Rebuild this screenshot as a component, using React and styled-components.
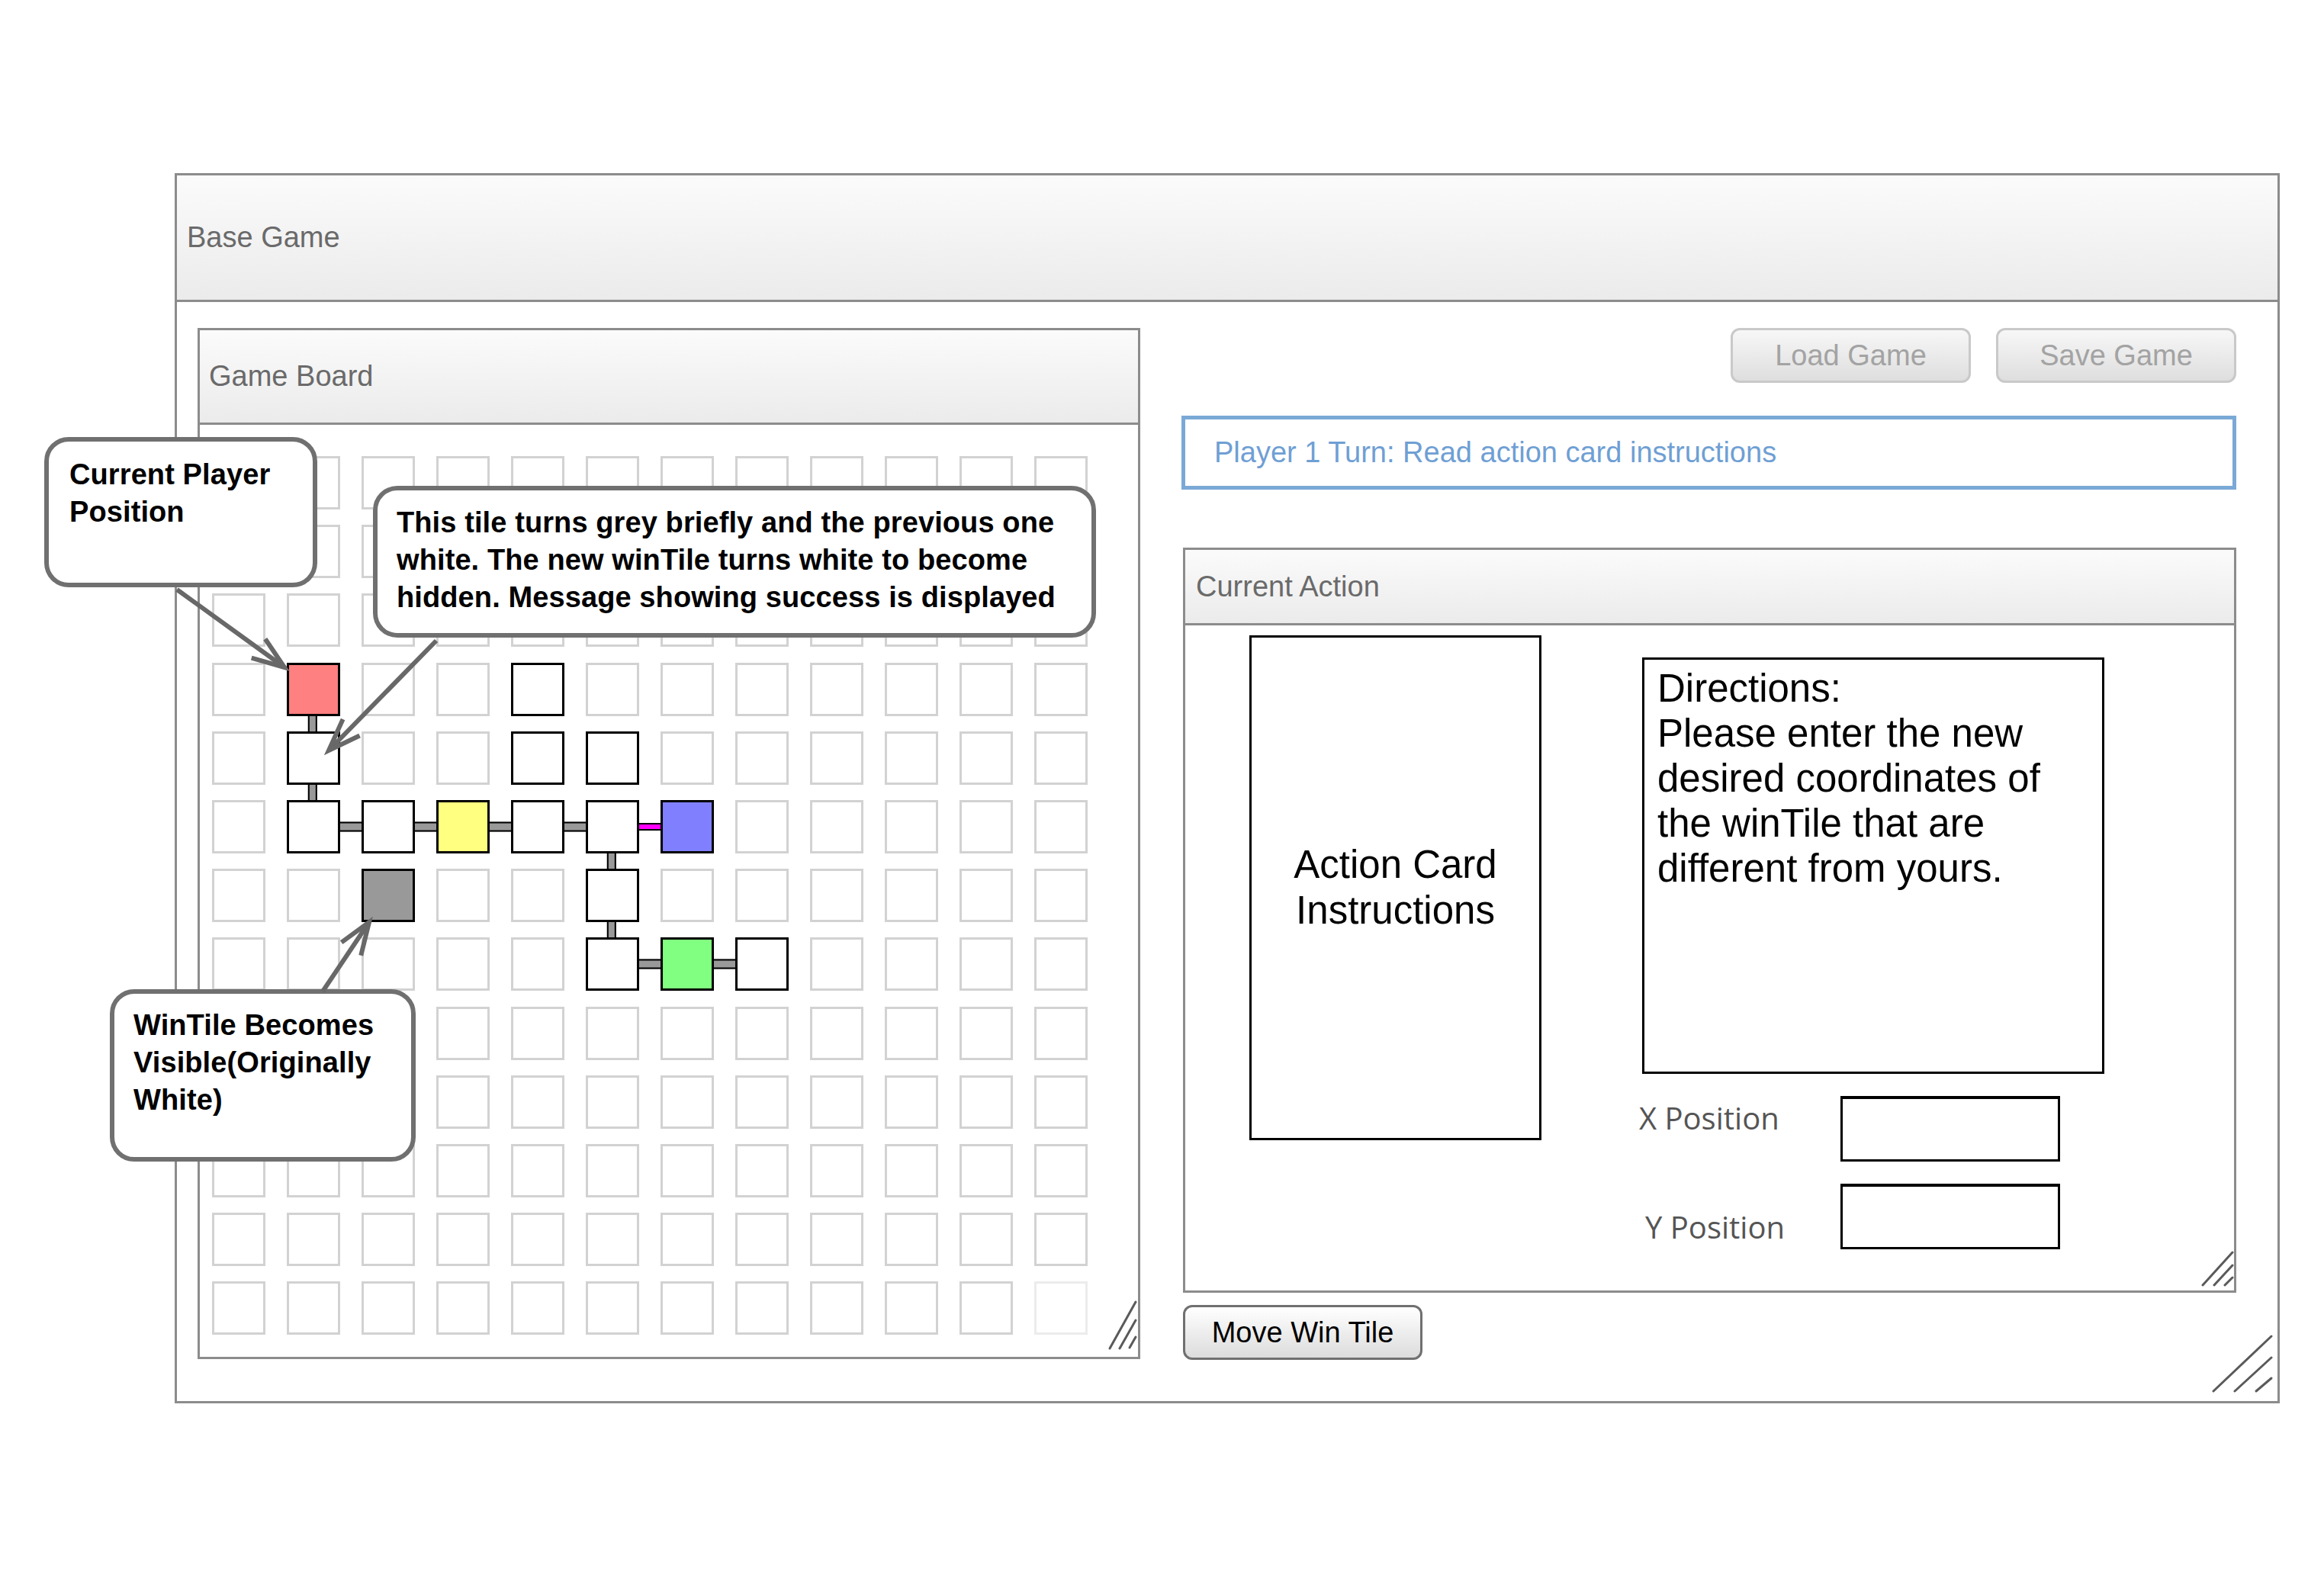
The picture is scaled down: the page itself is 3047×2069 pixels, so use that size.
import React from 'react';
import styled, { createGlobalStyle } from 'styled-components';

const GlobalStyle = createGlobalStyle`
  html, body {
    margin: 0;
    padding: 0;
    background: #fff;
  }
  body {
    font-family: "Liberation Sans", Arial, sans-serif;
  }
`;

const Page = styled.div`
  position: relative;
  width: 3047px;
  height: 2069px;
  padding: 227px 0 0 229px;
  box-sizing: border-box;
  overflow: hidden;
`;

const Window = styled.div`
  position: relative;
  width: 2760px;
  height: 1613px;
  box-sizing: border-box;
  border: 3px solid #8c8c8c;
  display: flex;
  flex-direction: column;
`;

const TitleBar = styled.div`
  flex: none;
  height: ${({ h }) => h}px;
  box-sizing: border-box;
  border-bottom: 3px solid #8c8c8c;
  background: linear-gradient(#fbfbfb, #ebebeb);
  display: flex;
  align-items: center;
  padding-left: ${({ pad }) => pad}px;
  font-size: 38px;
  color: #6a6a6a;
`;

const WindowBody = styled.div`
  flex: 1;
  display: flex;
  padding: 34px 0 0 27px;
  gap: 54px;
`;

const Panel = styled.div`
  position: relative;
  flex: none;
  width: ${({ w }) => w}px;
  height: ${({ h }) => h}px;
  box-sizing: border-box;
  border: 3px solid #8c8c8c;
  display: flex;
  flex-direction: column;
  background: #fff;
`;

const BoardBody = styled.div`
  padding: 41px 0 0 16px;
`;

const TileGrid = styled.div`
  display: grid;
  grid-template-columns: repeat(12, 70px);
  grid-auto-rows: 70px;
  column-gap: 28px;
  row-gap: 20.2px;
`;

const Tile = styled.div`
  position: relative;
  box-sizing: border-box;
  border: 3px solid ${({ active, faded }) => (active ? '#000' : faded ? '#ececec' : '#d2d2d2')};
  background: ${({ fill }) => fill || '#fff'};
  z-index: ${({ active }) => (active ? 2 : 1)};
`;

const LinkRight = styled.span`
  position: absolute;
  left: 67px;
  top: 50%;
  width: 28px;
  height: ${({ magenta }) => (magenta ? 10 : 13)}px;
  transform: translateY(-50%);
  box-sizing: border-box;
  border-top: 2px solid #000;
  border-bottom: 2px solid #000;
  background: ${({ magenta }) => (magenta ? '#ff00ff' : '#999')};
`;

const LinkDown = styled.span`
  position: absolute;
  top: 67px;
  left: 50%;
  width: 12px;
  height: 21px;
  transform: translateX(-60%);
  box-sizing: border-box;
  border-left: 2px solid #000;
  border-right: 2px solid #000;
  background: #999;
`;

const SideColumn = styled.div`
  width: 1383px;
  display: flex;
  flex-direction: column;
`;

const ButtonRow = styled.div`
  display: flex;
  justify-content: flex-end;
  gap: 33px;
`;

const GreyButton = styled.div`
  width: 315px;
  height: 72px;
  box-sizing: border-box;
  border: 3px solid #c9c9c9;
  border-radius: 12px;
  background: linear-gradient(#f7f7f7, #dedede);
  display: flex;
  align-items: center;
  justify-content: center;
  font-size: 38px;
  color: #a3a3a3;
`;

const StatusBox = styled.div`
  margin-top: 43px;
  height: 97px;
  box-sizing: border-box;
  border: 5px solid #7aa9d6;
  display: flex;
  align-items: center;
  padding-left: 38px;
  font-size: 38px;
  color: #6f9fd4;
`;

const ActionBody = styled.div`
  display: flex;
  padding: 13px 0 0 84px;
`;

const CardBox = styled.div`
  width: 383px;
  height: 662px;
  box-sizing: border-box;
  border: 3px solid #000;
  display: flex;
  align-items: center;
  justify-content: center;
  text-align: center;
  font-size: 51px;
  line-height: 60px;
  color: #000;
`;

const DirectionsColumn = styled.div`
  margin-left: 132px;
  padding-top: 29px;
  display: flex;
  flex-direction: column;
`;

const DirectionsBox = styled.div`
  width: 606px;
  height: 546px;
  box-sizing: border-box;
  border: 3px solid #000;
  padding: 8px 0 0 17px;
  font-size: 51px;
  line-height: 59px;
  color: #000;
`;

const PositionGrid = styled.div`
  margin: 29px 0 0 -4px;
  display: grid;
  grid-template-columns: 264px 288px;
  grid-auto-rows: 86px;
  row-gap: 29px;
`;

const PositionLabel = styled.div`
  align-self: center;
  padding-left: ${({ indent }) => indent}px;
  margin-top: ${({ shift }) => (shift > 0 ? shift * 2 : 0)}px;
  margin-bottom: ${({ shift }) => (shift < 0 ? -shift * 2 : 0)}px;
  font-family: "Open Sans", "Liberation Sans", sans-serif;
  font-size: 40px;
  color: #555;
`;

const InputBox = styled.div`
  box-sizing: border-box;
  border: 3px solid #000;
  border-top-width: 4px;
  background: #fff;
`;

const MoveButton = styled.div`
  margin: 16px 0 0 2px;
  width: 314px;
  height: 72px;
  box-sizing: border-box;
  border: 3px solid #707070;
  border-radius: 12px;
  background: linear-gradient(#ffffff, #dcdcdc);
  display: flex;
  align-items: center;
  justify-content: center;
  font-size: 38px;
  color: #000;
`;

const GripSvg = styled.svg`
  position: absolute;
  right: 0;
  bottom: 0;
`;

const Callout = styled.div`
  position: absolute;
  left: ${({ x }) => x}px;
  top: ${({ y }) => y}px;
  width: ${({ w }) => w}px;
  height: ${({ h }) => h}px;
  box-sizing: border-box;
  border: 6px solid #707070;
  border-radius: 32px;
  background: #fff;
  padding: ${({ pt }) => pt}px 0 0 ${({ pl }) => pl}px;
  font-weight: bold;
  font-size: 38px;
  line-height: 49px;
  letter-spacing: 0.1px;
  color: #000;
  white-space: nowrap;
  z-index: 5;
`;

const ArrowLayer = styled.svg`
  position: absolute;
  left: 0;
  top: 0;
  pointer-events: none;
  z-index: 6;
`;

const cells = {
  '3-1': { fill: '#ff8080', down: true },
  '3-4': {},
  '4-1': { down: true },
  '4-4': {},
  '4-5': {},
  '5-1': { right: 'grey' },
  '5-2': { right: 'grey' },
  '5-3': { fill: '#ffff80', right: 'grey' },
  '5-4': { right: 'grey' },
  '5-5': { right: 'magenta', down: true },
  '5-6': { fill: '#8080ff' },
  '6-2': { fill: '#999999' },
  '6-5': { down: true },
  '7-5': { right: 'grey' },
  '7-6': { fill: '#80ff80', right: 'grey' },
  '7-7': {},
};

const Grip = ({ w, h, lines }) => (
  <GripSvg width={w} height={h} viewBox={`0 0 ${w} ${h}`}>
    {lines.map((l, i) => (
      <line key={i} x1={l[0]} y1={l[1]} x2={l[2]} y2={l[3]} stroke="#5a5a5a" strokeWidth="3" strokeLinecap="round" />
    ))}
  </GripSvg>
);

const Arrow = ({ from, to }) => {
  const dx = from[0] - to[0];
  const dy = from[1] - to[1];
  const len = Math.hypot(dx, dy);
  const ux = dx / len;
  const uy = dy / len;
  const wing = (deg) => {
    const a = (deg * Math.PI) / 180;
    const c = Math.cos(a);
    const s = Math.sin(a);
    return [to[0] + 45 * (ux * c - uy * s), to[1] + 45 * (ux * s + uy * c)];
  };
  const w1 = wing(20);
  const w2 = wing(-20);
  return (
    <g stroke="#686868" strokeWidth="6" fill="none">
      <line x1={from[0]} y1={from[1]} x2={to[0]} y2={to[1]} />
      <polyline points={`${w1[0]},${w1[1]} ${to[0]},${to[1]} ${w2[0]},${w2[1]}`} />
    </g>
  );
};

const Board = () => {
  const tiles = [];
  for (let r = 0; r < 13; r++) {
    for (let c = 0; c < 12; c++) {
      const cell = cells[`${r}-${c}`];
      tiles.push(
        <Tile key={`${r}-${c}`} active={!!cell} fill={cell && cell.fill} faded={r === 12 && c === 11}>
          {cell && cell.right && <LinkRight magenta={cell.right === 'magenta'} />}
          {cell && cell.down && <LinkDown />}
        </Tile>
      );
    }
  }
  return <TileGrid>{tiles}</TileGrid>;
};

export default function App() {
  return (
    <Page>
      <GlobalStyle />
      <Window>
        <TitleBar h={166} pad={13}>Base Game</TitleBar>
        <WindowBody>
          <Panel w={1236} h={1352}>
            <TitleBar h={124} pad={12}>Game Board</TitleBar>
            <BoardBody>
              <Board />
            </BoardBody>
            <Grip w={40} h={75} lines={[[3, 64, 37, 3], [16, 64, 37, 27], [29, 63, 37, 49]]} />
          </Panel>
          <SideColumn>
            <ButtonRow>
              <GreyButton>Load Game</GreyButton>
              <GreyButton>Save Game</GreyButton>
            </ButtonRow>
            <StatusBox>Player 1 Turn: Read action card instructions</StatusBox>
            <Panel w={1381} h={977} style={{ marginTop: 76, marginLeft: 2 }}>
              <TitleBar h={99} pad={14}>Current Action</TitleBar>
              <ActionBody>
                <CardBox>
                  Action Card
                  <br />
                  Instructions
                </CardBox>
                <DirectionsColumn>
                  <DirectionsBox>
                    Directions:
                    <br />
                    Please enter the new
                    <br />
                    desired coordinates of
                    <br />
                    the winTile that are
                    <br />
                    different from yours.
                  </DirectionsBox>
                  <PositionGrid>
                    <PositionLabel indent={0} shift={-15}>X Position</PositionLabel>
                    <InputBox />
                    <PositionLabel indent={8} shift={13}>Y Position</PositionLabel>
                    <InputBox />
                  </PositionGrid>
                </DirectionsColumn>
              </ActionBody>
              <Grip w={50} h={60} lines={[[9, 53, 48, 10], [24, 53, 48, 27], [38, 53, 48, 43]]} />
            </Panel>
            <MoveButton>Move Win Tile</MoveButton>
          </SideColumn>
        </WindowBody>
        <Grip w={90} h={90} lines={[[6, 77, 82, 5], [34, 77, 82, 33], [62, 77, 82, 60]]} />
      </Window>

      <Callout x={58} y={573} w={358} h={197} pt={19} pl={27}>
        Current Player
        <br />
        Position
      </Callout>
      <Callout x={489} y={637} w={948} h={199} pt={18} pl={25}>
        This tile turns grey briefly and the previous one
        <br />
        white. The new winTile turns white to become
        <br />
        hidden. Message showing success is displayed
      </Callout>
      <Callout x={144} y={1297} w={401} h={226} pt={17} pl={25}>
        WinTile Becomes
        <br />
        Visible(Originally
        <br />
        White)
      </Callout>

      <ArrowLayer width="3047" height="2069" viewBox="0 0 3047 2069">
        <Arrow from={[232, 773]} to={[373, 875]} />
        <Arrow from={[572, 840]} to={[431, 984]} />
        <Arrow from={[423, 1300]} to={[484, 1209]} />
      </ArrowLayer>
    </Page>
  );
}
